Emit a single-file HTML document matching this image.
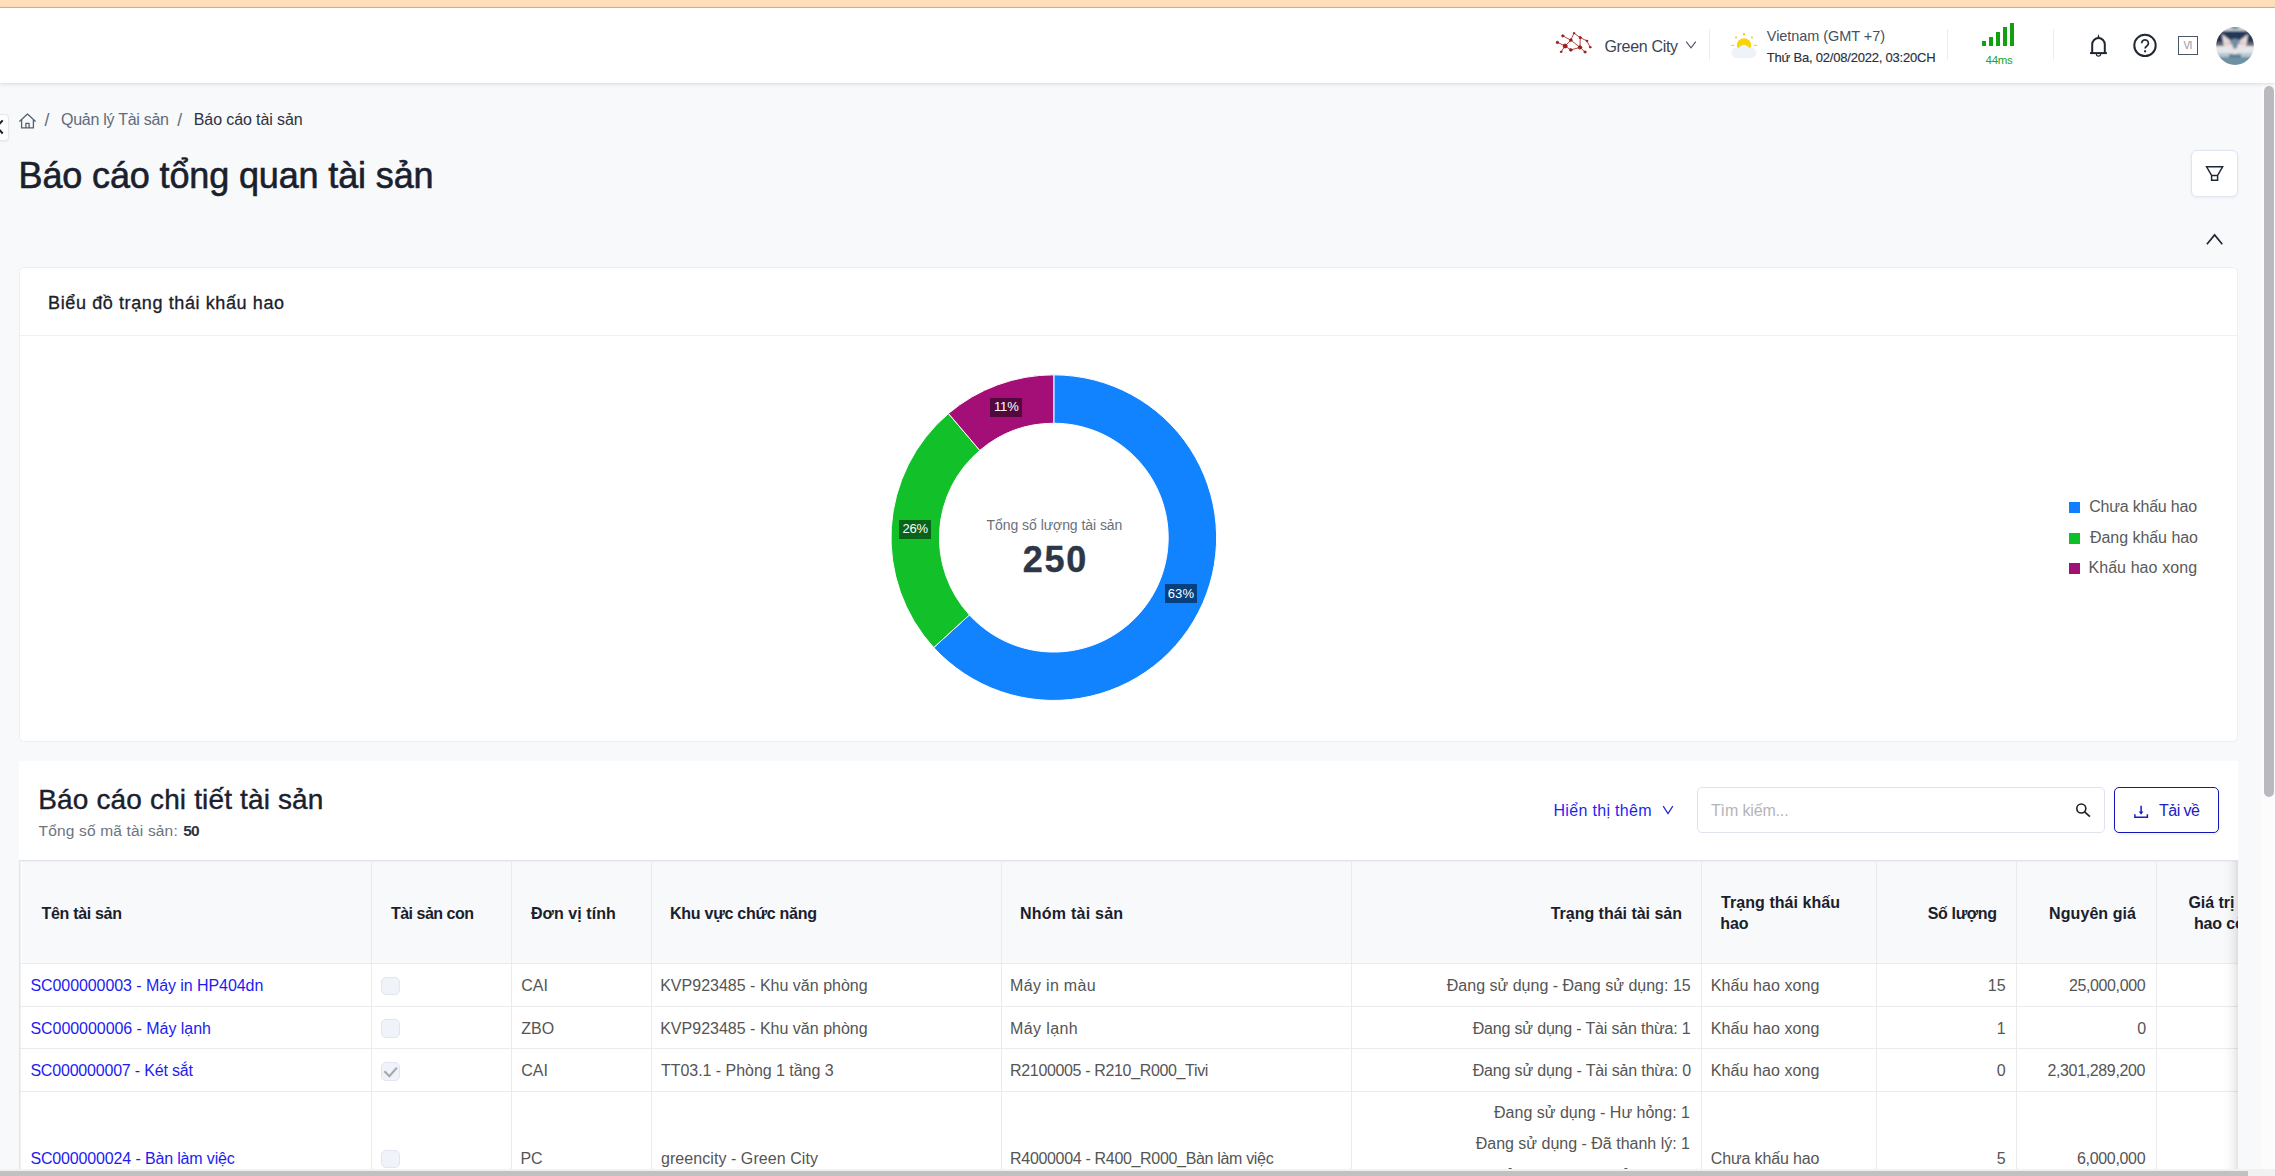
<!DOCTYPE html>
<html lang="vi">
<head>
<meta charset="utf-8">
<title>Báo cáo tổng quan tài sản</title>
<style>
*{box-sizing:border-box;margin:0;padding:0}
html,body{width:2275px;height:1176px;overflow:hidden;background:#f8f9fb;font-family:"Liberation Sans",sans-serif}
body{position:relative}
.a{position:absolute}
.t{position:absolute;white-space:pre;line-height:normal;font-family:"Liberation Sans",sans-serif}
.topbar{left:0;top:0;width:2275px;height:8px;background:#ffdfb8;border-bottom:1px solid #cfb496}
.header{left:0;top:8px;width:2275px;height:75px;background:#fff;box-shadow:0 1px 4px rgba(40,50,70,.16)}
.vdiv{width:1px;background:#ebedf0;top:28.5px;height:31px}
.card{background:#fff;border:1px solid #efefef;border-radius:5px}
.bar{background:#10a010;width:4px}
.vscroll-track{left:2261px;top:83px;width:14px;height:1093px;background:#fcfcfc}
.vscroll-thumb{left:2264px;top:86px;width:10px;height:710.5px;background:#b9b9bf;border-radius:5px}
.hscroll-track{left:0;top:1169px;width:2275px;height:7px;background:#f1f1f1}
.hscroll-thumb{left:0;top:1170.5px;width:2248px;height:6px;background:#c1c1c1}
.th{background:#f8f9fb}
.vl{width:1px;background:#ebebed;top:861px;height:309px}
.hl{height:1px;background:#ebebed;left:20px;width:2218px}
.cb{width:19px;height:18px;border:1px solid #e1e5ef;border-radius:5px;background:#f0f3f9;left:381px}
.lbl{height:19px;width:32px}
</style>
</head>
<body>
<div class="a topbar"></div>
<div class="a vscroll-track"></div>
<div class="a header"></div>

<!-- header: logo -->
<svg class="a" style="left:1550px;top:28px" width="48" height="30" viewBox="1550 28 48 30">
 <g stroke="#9a1c17" stroke-width="0.8" fill="#9a1c17" stroke-linecap="round">
  <path d="M1562.8 35.9L1570.8 40.1M1557.4 42.4L1565.1 46M1565.1 46L1561.1 51.8M1565.1 46L1570.8 40.1M1565.1 46L1570.8 49.9M1570.8 40.1L1574 33.2M1574 33.2L1580.2 37.6M1570.8 40.1L1580 47.4M1580.2 37.6L1580 47.4M1570.8 49.9L1580 47.4M1580.2 37.6L1586.9 40.9M1586.9 40.9L1590.2 47.2M1580 47.4L1585 52" fill="none"/>
  <circle cx="1562.8" cy="35.9" r="1.12"/><circle cx="1557.4" cy="42.4" r="1.20"/><circle cx="1565.1" cy="46" r="1.98"/>
  <circle cx="1561.1" cy="51.8" r="0.86"/><circle cx="1570.8" cy="40.1" r="1.29"/><circle cx="1570.8" cy="49.9" r="1.29"/>
  <circle cx="1574" cy="33.2" r="0.77"/><circle cx="1580.2" cy="37.6" r="1.12"/><circle cx="1580" cy="47.4" r="1.72"/>
  <circle cx="1586.9" cy="40.9" r="0.86"/><circle cx="1590.2" cy="47.2" r="0.86"/><circle cx="1585" cy="52" r="1.12"/>
 </g>
</svg>
<!-- chevron after Green City -->
<svg class="a" style="left:1684px;top:39px" width="14" height="12" viewBox="0 0 14 12"><path d="M2.2 2.6L7 8.8L11.8 2.6" fill="none" stroke="#4a5463" stroke-width="1.1"/></svg>
<div class="a vdiv" style="left:1709px"></div>
<!-- weather -->
<svg class="a" style="left:1728px;top:30px" width="32" height="30" viewBox="1728 30 32 30">
 <circle cx="1744" cy="45.3" r="7.1" fill="#f5d508"/>
 <g fill="#f5d508"><rect x="1743" y="33" width="2" height="2.2" rx=".5"/><rect x="1731.2" y="44.7" width="3.2" height="1.4" rx=".7"/><rect x="1753.8" y="44.7" width="3.2" height="1.4" rx=".7"/>
 <rect x="1735" y="36.5" width="2" height="1.8" rx=".6"/><rect x="1751" y="36.5" width="2" height="1.8" rx=".6"/></g>
 <circle cx="1744" cy="50.4" r="5.6" fill="#eef2f9"/>
 <rect x="1731.5" y="47.7" width="24.8" height="10.3" rx="5.1" fill="#eef2f9"/>
</svg>
<div class="a vdiv" style="left:1947px"></div>
<!-- signal -->
<div class="a bar" style="left:1982px;top:41px;height:4.6px"></div>
<div class="a bar" style="left:1989px;top:37px;height:8.6px"></div>
<div class="a bar" style="left:1996px;top:32px;height:13.6px"></div>
<div class="a bar" style="left:2003px;top:27px;height:18.6px"></div>
<div class="a bar" style="left:2010px;top:23px;height:22.6px"></div>
<div class="a vdiv" style="left:2053px"></div>
<!-- bell -->
<svg class="a" style="left:2087px;top:32px" width="24" height="28" viewBox="2087 32 24 28">
 <path d="M2090 53.1H2106.9" fill="none" stroke="#1f2733" stroke-width="2"/>
 <path d="M2092.2 53.1V44.4A6.3 6.3 0 0 1 2104.8 44.4V53.1" fill="none" stroke="#1f2733" stroke-width="2"/>
 <path d="M2097.4 37.4L2098.5 34L2099.6 37.4Z" fill="#1f2733"/>
 <path d="M2096.4 54A2.1 2.1 0 0 0 2100.6 54" fill="none" stroke="#1f2733" stroke-width="1.2"/>
</svg>
<!-- help -->
<svg class="a" style="left:2131px;top:32px" width="28" height="28" viewBox="2131 32 28 28">
 <circle cx="2145" cy="45.4" r="10.7" fill="none" stroke="#1f2733" stroke-width="2"/>
 <path d="M2141.7 43.2A3.35 3.35 0 1 1 2146.9 46Q2145.1 47.2 2145.1 48.6" fill="none" stroke="#1f2733" stroke-width="1.7"/>
 <rect x="2144.1" y="50.3" width="2" height="2" fill="#1f2733"/>
</svg>
<!-- VI box -->
<div class="a" style="left:2178px;top:36px;width:20px;height:18.6px;border:1px solid #4b5566"></div>
<!-- avatar -->
<svg class="a" style="left:2216px;top:26.5px" width="38" height="38" viewBox="0 0 38 38">
 <defs><clipPath id="avc"><circle cx="19" cy="19" r="18.9"/></clipPath><filter id="avb" x="-10%" y="-10%" width="120%" height="120%"><feGaussianBlur stdDeviation="0.9"/></filter></defs>
 <g clip-path="url(#avc)"><g filter="url(#avb)">
  <rect x="-2" y="-2" width="42" height="42" fill="#23395a"/>
  <rect x="-2" y="-2" width="42" height="6" fill="#c9d0d6"/>
  <ellipse cx="19" cy="0.5" rx="4" ry="1.2" fill="#3f6f7e"/>
  <rect x="-2" y="15.3" width="42" height="3.2" fill="#6f6c72"/>
  <rect x="-2" y="19" width="42" height="10" fill="#e3e7ec"/>
  <rect x="-2" y="27" width="42" height="14" fill="#6d90a3"/>
  <rect x="-2" y="26" width="42" height="4" fill="#b7c8d2"/>
  <path d="M6 7L15 14L14 24L8 20Z" fill="#e9dcdc"/><path d="M32 7L23 14L24 24L30 20Z" fill="#e9dcdc"/>
  <path d="M10.5 13L13 19L11 19Z" fill="#e9a58e"/><path d="M27.5 13L25 19L27 19Z" fill="#e9a58e"/>
  <ellipse cx="19" cy="16.5" rx="5.2" ry="4.8" fill="#7c92a7"/>
  <path d="M9 19Q19 14 29 19L24 25L19 28L14 25Z" fill="#e6e4e8"/>
  <ellipse cx="19" cy="17.5" rx="2.6" ry="4.2" fill="#7088a0"/>
  <rect x="13" y="27.5" width="12" height="2.5" fill="#50708a"/>
 </g></g>
</svg>

<!-- sidebar collapse stub -->
<div class="a" style="left:-6px;top:113.5px;width:15.3px;height:27px;background:#fff;border:1px solid #e3e7f0;border-radius:4px;box-shadow:0 1px 2px rgba(0,0,0,.06)"></div>
<svg class="a" style="left:0;top:117px" width="6" height="20" viewBox="0 117 6 20"><path d="M2.7 120.3L-3.2 126.9L2.7 133.5" fill="none" stroke="#1d222b" stroke-width="2"/></svg>
<!-- home icon -->
<svg class="a" style="left:18px;top:112px" width="20" height="18" viewBox="18 112 20 18">
 <path d="M19.4 121.4L27.5 114.1L35.6 121.4M21.6 119.8V127.9H33.4V119.8M25.9 127.9V123.3H29.1V127.9" fill="none" stroke="#566070" stroke-width="1.3" stroke-linejoin="round"/>
</svg>

<!-- filter button -->
<div class="a" style="left:2191px;top:150px;width:47px;height:47px;background:#fff;border:1px solid #dfe5f1;border-radius:6px;box-shadow:0 1px 3px rgba(40,60,100,.07)"></div>
<svg class="a" style="left:2204px;top:164px" width="22" height="19" viewBox="2204 164 22 19">
 <path d="M2206.6 166.8H2222.6L2217.6 175.4V180.2H2211.6V175.4ZM2211.6 175.4H2217.6" fill="none" stroke="#1f2733" stroke-width="1.5" stroke-linejoin="miter"/>
</svg>
<!-- collapse chevron -->
<svg class="a" style="left:2204px;top:231px" width="22" height="16" viewBox="2204 231 22 16"><path d="M2206.9 244.2L2214.6 234.9L2222.3 244.2" fill="none" stroke="#1f2733" stroke-width="1.7"/></svg>

<!-- card 1 -->
<div class="a card" style="left:19px;top:267px;width:2219px;height:475px"></div>
<div class="a" style="left:20px;top:335px;width:2217.5px;height:1px;background:#eef0f4"></div>
<svg class="a" style="left:880px;top:365px" width="350" height="345" viewBox="880 365 350 345">
<path d="M1053.80 374.85A162.8 162.8 0 1 1 933.73 647.59L969.43 614.91A114.4 114.4 0 1 0 1053.80 423.25Z" fill="#1283ff" stroke="#fff" stroke-width="1"/>
<path d="M933.73 647.59A162.8 162.8 0 0 1 948.46 413.52L979.78 450.43A114.4 114.4 0 0 0 969.43 614.91Z" fill="#12c12a" stroke="#fff" stroke-width="1"/>
<path d="M948.46 413.52A162.8 162.8 0 0 1 1053.80 374.85L1053.80 423.25A114.4 114.4 0 0 0 979.78 450.43Z" fill="#a30f77" stroke="#fff" stroke-width="1"/>
</svg>
<div class="a lbl" style="left:990.1px;top:398.1px;background:#520a3e"></div>
<div class="a lbl" style="left:899.2px;top:519.8px;background:#086318"></div>
<div class="a lbl" style="left:1165.1px;top:584.2px;background:#06407f"></div>
<!-- legend squares -->
<div class="a" style="left:2069px;top:502.2px;width:11px;height:10.8px;background:#0f7fff"></div>
<div class="a" style="left:2069px;top:533px;width:11px;height:10.8px;background:#0fbf27"></div>
<div class="a" style="left:2069px;top:563.3px;width:11px;height:10.8px;background:#9f0f74"></div>

<!-- card 2 -->
<div class="a" style="left:19px;top:761px;width:2219px;height:420px;background:#fff"></div>
<!-- chevron after Hiển thị thêm -->
<svg class="a" style="left:1661px;top:803px" width="14" height="14" viewBox="0 0 14 14"><path d="M2.2 3.2L7 10.6L11.8 3.2" fill="none" stroke="#2323d8" stroke-width="1.2"/></svg>
<!-- search box -->
<div class="a" style="left:1697px;top:787px;width:407.8px;height:45.6px;background:#fff;border:1px solid #dee3ee;border-radius:5px"></div>
<svg class="a" style="left:2074px;top:801px" width="20" height="20" viewBox="2074 801 20 20">
 <circle cx="2081.3" cy="808.5" r="4.5" fill="none" stroke="#222" stroke-width="1.6"/><path d="M2084.6 811.8L2089.9 816.7" stroke="#222" stroke-width="1.7"/>
</svg>
<!-- download button -->
<div class="a" style="left:2114px;top:787px;width:105px;height:45.6px;background:#fff;border:1.3px solid #1414bb;border-radius:5px;box-shadow:0 2px 3px rgba(0,0,30,.05)"></div>
<svg class="a" style="left:2131px;top:803px" width="20" height="18" viewBox="2131 803 20 18">
 <path d="M2141.1 805.7V812.4M2134.9 814.2V817.2H2147.4V814.2" fill="none" stroke="#1c1cc0" stroke-width="1.5"/>
 <path d="M2138.8 811.5H2143.4L2141.1 814.7Z" fill="#1c1cc0"/>
</svg>

<!-- table -->
<div class="a" style="left:0;top:0;width:2237.5px;height:1169px;overflow:hidden">
 <div class="a" style="left:19px;top:860px;width:2300px;height:330px;border:1px solid #e1e4e8;background:#fff"></div>
 <div class="a" style="left:20px;top:861px;width:2300px;height:330px;border-left:1px solid #eff0f2;border-top:1px solid #eff0f2"></div>
 <div class="a th" style="left:22px;top:862px;width:2300px;height:101px"></div>
 <div class="a vl" style="left:371px"></div><div class="a vl" style="left:511px"></div><div class="a vl" style="left:651px"></div>
 <div class="a vl" style="left:1001px"></div><div class="a vl" style="left:1351px"></div><div class="a vl" style="left:1701px"></div>
 <div class="a vl" style="left:1876px"></div><div class="a vl" style="left:2016px"></div><div class="a vl" style="left:2156px"></div>
 <div class="a hl" style="top:963px"></div><div class="a hl" style="top:1006px"></div><div class="a hl" style="top:1048px"></div><div class="a hl" style="top:1091px"></div>
 <div class="a cb" style="top:977px"></div><div class="a cb" style="top:1019px;height:19px"></div>
 <div class="a cb" style="top:1062px;height:19px"></div><div class="a cb" style="top:1150px"></div>
 <svg class="a" style="left:382px;top:1063px" width="18" height="18" viewBox="382 1063 18 18"><path d="M384.4 1071.3L389.4 1076.2L396.9 1067.6" fill="none" stroke="#a6a8ac" stroke-width="2.2"/></svg>
<span class="t" style="left:2188.4px;top:894.4px;font-size:16px;font-weight:700;color:#1a202c;letter-spacing:-0.039px;">Giá trị khấu</span>
<span class="t" style="left:2194.0px;top:915.0px;font-size:16px;font-weight:700;color:#1a202c;letter-spacing:-0.158px;">hao còn lại</span>
 <div class="a" style="left:2222px;top:861px;width:16px;height:309px;background:linear-gradient(90deg,rgba(50,50,55,0) 0%,rgba(50,50,55,.012) 30%,rgba(50,50,55,.045) 60%,rgba(50,50,55,.095) 85%,rgba(50,50,55,.14) 100%)"></div>
</div>

<span class="t" style="left:1604.4px;top:37.5px;font-size:16px;color:#3a4554;letter-spacing:-0.312px;">Green City</span>
<span class="t" style="left:1766.8px;top:27.5px;font-size:14.5px;color:#465161;letter-spacing:-0.060px;">Vietnam (GMT +7)</span>
<span class="t" style="left:1766.8px;top:49.7px;font-size:13px;color:#27303f;letter-spacing:-0.208px;-webkit-text-stroke:0.15px #27303f;">Thứ Ba, 02/08/2022, 03:20CH</span>
<span class="t" style="left:1985.6px;top:53.7px;font-size:11.5px;color:#1fa51f;letter-spacing:-0.342px;">44ms</span>
<span class="t" style="left:2183.4px;top:39.8px;font-size:10px;color:#8c95a5;letter-spacing:-0.653px;">VI</span>
<span class="t" style="left:44.5px;top:110.4px;font-size:17.5px;color:#5f6b7a;letter-spacing:0.000px;">/</span>
<span class="t" style="left:61.0px;top:111.1px;font-size:16px;color:#5f6b7a;letter-spacing:-0.268px;">Quản lý Tài sản</span>
<span class="t" style="left:177.3px;top:110.4px;font-size:17.5px;color:#5f6b7a;letter-spacing:0.000px;">/</span>
<span class="t" style="left:193.8px;top:111.1px;font-size:16px;color:#2d3340;letter-spacing:-0.105px;">Báo cáo tài sản</span>
<span class="t" style="left:18.6px;top:155.2px;font-size:36px;color:#1a202c;letter-spacing:-0.139px;-webkit-text-stroke:0.6px #1a202c;">Báo cáo tổng quan tài sản</span>
<span class="t" style="left:48.1px;top:292.9px;font-size:18px;color:#1a202c;letter-spacing:0.606px;-webkit-text-stroke:0.3px #1a202c;">Biểu đồ trạng thái khấu hao</span>
<span class="t" style="left:986.6px;top:516.6px;font-size:14px;color:#6a7078;letter-spacing:-0.054px;">Tổng số lượng tài sản</span>
<span class="t" style="left:1022.7px;top:539.0px;font-size:36px;font-weight:700;color:#2d3748;letter-spacing:1.751px;-webkit-text-stroke:0.4px #2d3748;">250</span>
<span class="t" style="left:993.9px;top:399.4px;font-size:13px;color:#fff;letter-spacing:-0.081px;">11%</span>
<span class="t" style="left:902.6px;top:521.3px;font-size:13px;color:#fff;letter-spacing:-0.216px;">26%</span>
<span class="t" style="left:1167.8px;top:585.7px;font-size:13px;color:#fff;letter-spacing:0.084px;">63%</span>
<span class="t" style="left:2089.2px;top:498.3px;font-size:16px;color:#5a5a5a;letter-spacing:-0.204px;">Chưa khấu hao</span>
<span class="t" style="left:2090.0px;top:528.9px;font-size:16px;color:#5a5a5a;letter-spacing:-0.046px;">Đang khấu hao</span>
<span class="t" style="left:2088.4px;top:559.0px;font-size:16px;color:#5a5a5a;letter-spacing:0.087px;">Khấu hao xong</span>
<span class="t" style="left:38.3px;top:783.6px;font-size:28px;color:#1a202c;letter-spacing:0.145px;-webkit-text-stroke:0.4px #1a202c;">Báo cáo chi tiết tài sản</span>
<span class="t" style="left:38.6px;top:821.8px;font-size:15.5px;color:#6b7380;letter-spacing:0.165px;">Tổng số mã tài sản:</span>
<span class="t" style="left:183.2px;top:821.8px;font-size:15.5px;font-weight:700;color:#2d3340;letter-spacing:-0.750px;">50</span>
<span class="t" style="left:1553.5px;top:801.6px;font-size:16px;color:#1f1ff2;letter-spacing:0.315px;">Hiển thị thêm</span>
<span class="t" style="left:1711.0px;top:801.6px;font-size:16px;color:#b4b4b8;letter-spacing:-0.151px;">Tìm kiếm...</span>
<span class="t" style="left:2159.0px;top:801.6px;font-size:16px;color:#2020c4;letter-spacing:-0.516px;">Tải về</span>
<span class="t" style="left:41.5px;top:905.1px;font-size:16px;font-weight:700;color:#1a202c;letter-spacing:-0.314px;">Tên tài sản</span>
<span class="t" style="left:390.9px;top:905.1px;font-size:16px;font-weight:700;color:#1a202c;letter-spacing:-0.493px;">Tài sản con</span>
<span class="t" style="left:530.9px;top:905.1px;font-size:16px;font-weight:700;color:#1a202c;letter-spacing:0.073px;">Đơn vị tính</span>
<span class="t" style="left:670.0px;top:905.1px;font-size:16px;font-weight:700;color:#1a202c;letter-spacing:-0.260px;">Khu vực chức năng</span>
<span class="t" style="left:1020.0px;top:905.1px;font-size:16px;font-weight:700;color:#1a202c;letter-spacing:0.234px;">Nhóm tài sản</span>
<span class="t" style="left:1550.7px;top:905.1px;font-size:16px;font-weight:700;color:#1a202c;letter-spacing:-0.015px;">Trạng thái tài sản</span>
<span class="t" style="left:1721.1px;top:894.4px;font-size:16px;font-weight:700;color:#1a202c;letter-spacing:0.046px;">Trạng thái khấu</span>
<span class="t" style="left:1720.3px;top:915.0px;font-size:16px;font-weight:700;color:#1a202c;letter-spacing:-0.047px;">hao</span>
<span class="t" style="left:1927.8px;top:905.1px;font-size:16px;font-weight:700;color:#1a202c;letter-spacing:-0.372px;">Số lượng</span>
<span class="t" style="left:2049.1px;top:905.1px;font-size:16px;font-weight:700;color:#1a202c;letter-spacing:0.074px;">Nguyên giá</span>
<span class="t" style="left:30.4px;top:977.2px;font-size:16px;color:#1c1cf2;letter-spacing:-0.071px;">SC000000003 - Máy in HP404dn</span>
<span class="t" style="left:521.2px;top:977.2px;font-size:16px;color:#555555;letter-spacing:0.000px;">CAI</span>
<span class="t" style="left:660.2px;top:977.2px;font-size:16px;color:#555555;letter-spacing:0.008px;">KVP923485 - Khu văn phòng</span>
<span class="t" style="left:1010.1px;top:977.2px;font-size:16px;color:#555555;letter-spacing:0.311px;">Máy in màu</span>
<span class="t" style="left:1710.8px;top:977.2px;font-size:16px;color:#555555;letter-spacing:0.079px;">Khấu hao xong</span>
<span class="t" style="left:1987.8px;top:977.2px;font-size:16px;color:#555555;letter-spacing:0.000px;">15</span>
<span class="t" style="left:2069.0px;top:977.2px;font-size:16px;color:#555555;letter-spacing:-0.391px;">25,000,000</span>
<span class="t" style="left:30.4px;top:1019.8px;font-size:16px;color:#1c1cf2;letter-spacing:-0.046px;">SC000000006 - Máy lạnh</span>
<span class="t" style="left:521.2px;top:1019.8px;font-size:16px;color:#555555;letter-spacing:0.000px;">ZBO</span>
<span class="t" style="left:660.2px;top:1019.8px;font-size:16px;color:#555555;letter-spacing:0.008px;">KVP923485 - Khu văn phòng</span>
<span class="t" style="left:1010.1px;top:1019.8px;font-size:16px;color:#555555;letter-spacing:0.368px;">Máy lạnh</span>
<span class="t" style="left:1710.8px;top:1019.8px;font-size:16px;color:#555555;letter-spacing:0.079px;">Khấu hao xong</span>
<span class="t" style="left:1996.7px;top:1019.8px;font-size:16px;color:#555555;letter-spacing:0.000px;">1</span>
<span class="t" style="left:2137.2px;top:1019.8px;font-size:16px;color:#555555;letter-spacing:0.000px;">0</span>
<span class="t" style="left:30.4px;top:1062.3px;font-size:16px;color:#1c1cf2;letter-spacing:-0.194px;">SC000000007 - Két sắt</span>
<span class="t" style="left:521.2px;top:1062.3px;font-size:16px;color:#555555;letter-spacing:0.000px;">CAI</span>
<span class="t" style="left:661.0px;top:1062.3px;font-size:16px;color:#555555;letter-spacing:-0.041px;">TT03.1 - Phòng 1 tầng 3</span>
<span class="t" style="left:1010.1px;top:1062.3px;font-size:16px;color:#555555;letter-spacing:-0.349px;">R2100005 - R210_R000_Tivi</span>
<span class="t" style="left:1710.8px;top:1062.3px;font-size:16px;color:#555555;letter-spacing:0.079px;">Khấu hao xong</span>
<span class="t" style="left:1996.7px;top:1062.3px;font-size:16px;color:#555555;letter-spacing:0.000px;">0</span>
<span class="t" style="left:2047.4px;top:1062.3px;font-size:16px;color:#555555;letter-spacing:-0.351px;">2,301,289,200</span>
<span class="t" style="left:30.4px;top:1150.0px;font-size:16px;color:#1c1cf2;letter-spacing:-0.146px;">SC000000024 - Bàn làm việc</span>
<span class="t" style="left:520.4px;top:1150.0px;font-size:16px;color:#555555;letter-spacing:0.000px;">PC</span>
<span class="t" style="left:661.0px;top:1150.0px;font-size:16px;color:#555555;letter-spacing:0.061px;">greencity - Green City</span>
<span class="t" style="left:1010.1px;top:1150.0px;font-size:16px;color:#555555;letter-spacing:-0.324px;">R4000004 - R400_R000_Bàn làm việc</span>
<span class="t" style="left:1710.8px;top:1150.0px;font-size:16px;color:#555555;letter-spacing:-0.137px;">Chưa khấu hao</span>
<span class="t" style="left:1996.7px;top:1150.0px;font-size:16px;color:#555555;letter-spacing:0.000px;">5</span>
<span class="t" style="left:2077.0px;top:1150.0px;font-size:16px;color:#555555;letter-spacing:-0.326px;">6,000,000</span>
<span class="t" style="left:1446.8px;top:977.2px;font-size:16px;color:#555555;letter-spacing:0.003px;">Đang sử dụng - Đang sử dụng: 15</span>
<span class="t" style="left:1472.7px;top:1019.8px;font-size:16px;color:#555555;letter-spacing:-0.173px;">Đang sử dụng - Tài sản thừa: 1</span>
<span class="t" style="left:1472.7px;top:1062.3px;font-size:16px;color:#555555;letter-spacing:-0.158px;">Đang sử dụng - Tài sản thừa: 0</span>
<span class="t" style="left:1494.0px;top:1104.3px;font-size:16px;color:#555555;letter-spacing:0.010px;">Đang sử dụng - Hư hỏng: 1</span>
<span class="t" style="left:1475.7px;top:1135.2px;font-size:16px;color:#555555;letter-spacing:-0.003px;">Đang sử dụng - Đã thanh lý: 1</span>
<span class="t" style="left:1455.0px;top:1166.6px;font-size:16px;color:#555555;letter-spacing:0.003px;">Đang sử dụng - Đang sử dụng: 3</span>

<div class="a hscroll-track"></div>
<div class="a hscroll-thumb"></div>
<div class="a vscroll-thumb"></div>
</body>
</html>
